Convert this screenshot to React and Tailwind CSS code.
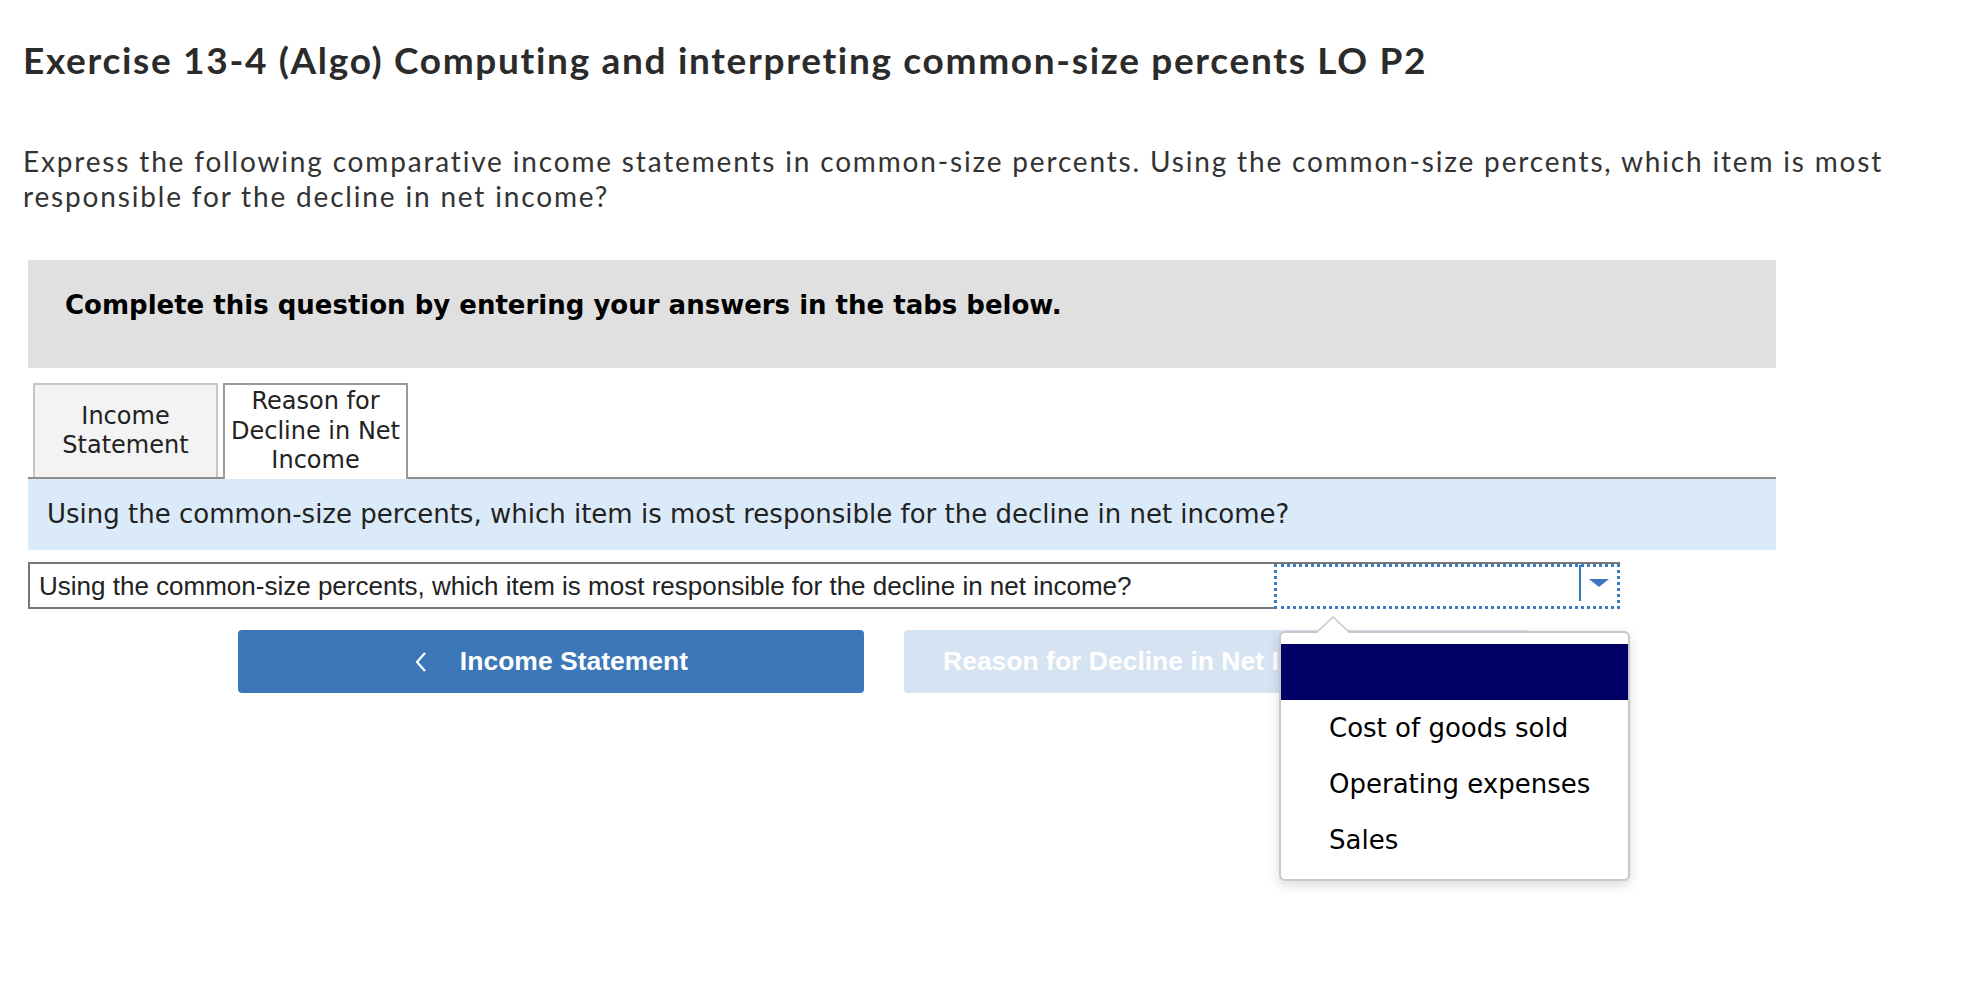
const verdana = "font-['DejaVu_Sans',Verdana,sans-serif]";
const arial = "font-['Liberation_Sans',Arial,sans-serif]";

const options = ["Cost of goods sold", "Operating expenses", "Sales"];

function Chevron({ dir }) {
  return (
    <svg width="14" height="22" viewBox="0 0 14 22" className="shrink-0">
      <path
        d={dir === "left" ? "M11 2 L3 11 L11 20" : "M3 2 L11 11 L3 20"}
        fill="none"
        stroke="white"
        strokeWidth="2.2"
      />
    </svg>
  );
}

export default function App() {
  return (
    <div className="relative w-[1966px] h-[1004px] bg-white overflow-hidden text-[#222]">
      <div className="pl-[23px] pt-[38px]">
        <h1 className="font-['Lato',sans-serif] font-bold text-[37px] leading-[44px] tracking-[1.68px] text-[#2b2b2b]">
          Exercise 13-4 (Algo) Computing and interpreting common-size percents LO P2
        </h1>
        <p className="mt-[62px] font-['Lato',sans-serif] text-[28px] leading-[35px] tracking-[1.83px] text-[#333]">
          Express the following comparative income statements in common-size percents. Using the common-size percents, which item is most
          <br />
          responsible for the decline in net income?
        </p>
      </div>

      <div className="ml-[28px] mt-[46px] w-[1748px]">
        {/* instructions */}
        <div className={`h-[108px] bg-[#e0e0e0] pl-[37px] pt-[30px] ${verdana} font-bold text-[26px] leading-[30px] text-black`}>
          Complete this question by entering your answers in the tabs below.
        </div>

        {/* tabs */}
        <div className={`mt-[15px] flex gap-[5px] pl-[5px] border-b-2 border-[#8d8d8d] ${verdana} text-[24px] leading-[29.5px]`}>
          <div className="w-[185px] h-[94px] border-2 border-b-0 border-[#c6c6c6] bg-[#f3f3f3] flex items-center justify-center text-center">
            Income
            <br />
            Statement
          </div>
          <div className="w-[185px] h-[96px] -mb-[2px] border-2 border-b-0 border-[#9a9a9a] bg-white pt-[2px] text-center">
            Reason for
            <br />
            Decline in Net
            <br />
            Income
          </div>
        </div>

        <div className={`h-[71px] bg-[#dbeaf8] pl-[19px] pt-[20px] ${verdana} text-[26px] leading-[30px]`}>
          Using the common-size percents, which item is most responsible for the decline in net income?
        </div>

        {/* answer row */}
        <div className="mt-[12px] flex w-[1592px] h-[47px] border-2 border-[#777]">
          <div className={`flex-1 pl-[9px] pt-[7px] ${arial} text-[26px] leading-[30px]`}>
            Using the common-size percents, which item is most responsible for the decline in net income?
          </div>
          <div className="w-[346px] h-[45px] -mr-[2px] -mb-[2px] border-[3px] border-dotted border-[#3b7bc4] bg-white flex">
            <div className="w-[302px]" />
            <div className="w-[37px] h-[36px] -mt-[2px] border-l-2 border-[#3b77c0] flex justify-center pt-[14px]">
              <svg width="20" height="8" viewBox="0 0 20 8">
                <path d="M0 0 H20 L10 8 Z" fill="#3b77c0" />
              </svg>
            </div>
          </div>
        </div>

        {/* navigation */}
        <div className={`mt-[21px] ml-[210px] flex gap-[40px] ${arial} font-bold text-[26.5px]`}>
          <button className="w-[626px] h-[63px] rounded-[4px] bg-[#3b77b9] text-white flex items-center justify-center gap-[32px]">
            <Chevron dir="left" />
            <span>Income Statement</span>
          </button>
          <button className="w-[626px] h-[63px] rounded-[4px] bg-[#d6e3f2] text-white flex items-center pl-[39px] gap-[32px]">
            <span>Reason for Decline in Net Income</span>
            <Chevron dir="right" />
          </button>
        </div>
      </div>

      {/* open dropdown list */}
      <div className={`absolute left-[1279px] top-[631px] w-[351px] h-[250px] rounded-[6px] border-2 border-[#c8c8c8] bg-white shadow-[0_4px_12px_rgba(0,0,0,0.15)] py-[11px] ${verdana} text-[26px] text-black`}>
        <svg width="34" height="18" viewBox="0 0 34 18" className="absolute left-[35px] -top-[17px]">
          <path d="M0 17 L17 1 L34 17" fill="white" stroke="#c8c8c8" strokeWidth="1.5" />
        </svg>
        <div className="h-[56px] bg-[#000066]" />
        {options.map((o) => (
          <div key={o} className="h-[56px] flex items-center pl-[48px]">
            {o}
          </div>
        ))}
      </div>
    </div>
  );
}
